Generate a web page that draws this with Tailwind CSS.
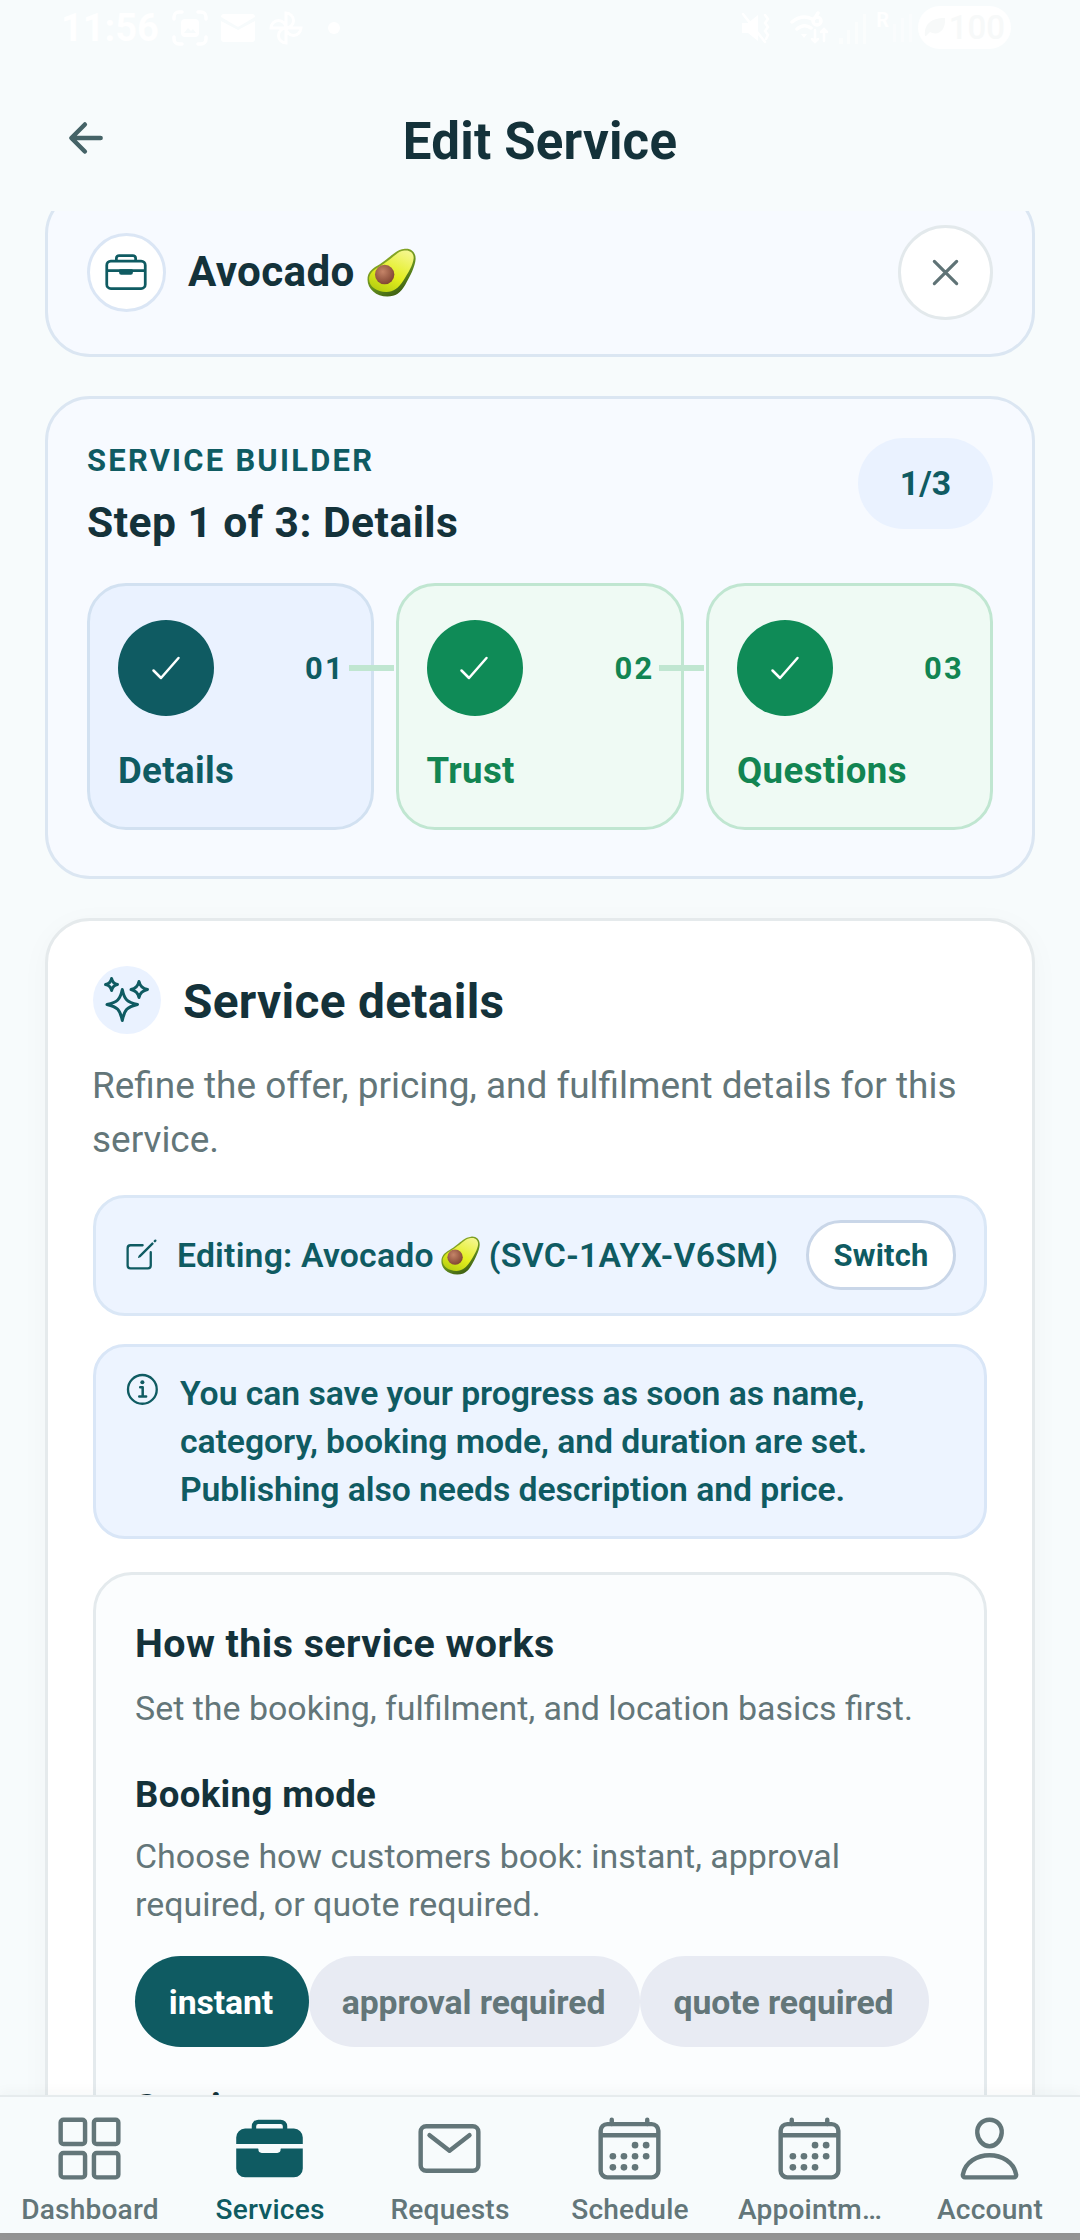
<!DOCTYPE html>
<html lang="en">
<head>
  <meta charset="UTF-8" />
  <meta name="viewport" content="width=device-width, initial-scale=1" />
  <title>Edit Service</title>
  <script src="https://cdn.jsdelivr.net/npm/@tailwindcss/browser@4"></script>
</head>
<body class="bg-[#f7fbfc] font-['Roboto',sans-serif] text-[#14323a]">
  <!-- Shared symbols -->
  <svg class="absolute h-0 w-0">
    <defs>
      <linearGradient id="skin" x1="0.2" y1="0" x2="0.8" y2="1">
        <stop offset="0" stop-color="#9db52a" />
        <stop offset="0.6" stop-color="#5f8a1c" />
        <stop offset="1" stop-color="#33500f" />
      </linearGradient>
      <linearGradient id="flesh" x1="0.8" y1="0" x2="0.3" y2="1">
        <stop offset="0" stop-color="#f4f68c" />
        <stop offset="0.6" stop-color="#e3ee1e" />
        <stop offset="1" stop-color="#b9d012" />
      </linearGradient>
      <radialGradient id="pit" cx="0.4" cy="0.35" r="0.7">
        <stop offset="0" stop-color="#c58468" />
        <stop offset="1" stop-color="#7d4230" />
      </radialGradient>
    </defs>
    <symbol id="avocado" viewBox="0 0 48 48">
      <path d="M37 .8C43 0 48 4 47.6 11C47.2 18 42 28 37.5 36C33 44 28 47.5 20 47.5C9 47.5 .5 40 .5 31C.5 24.500 4 21 10 17.500C18 12.500 22 8.500 27 4.800C30.500 2.200 33 1.300 37 .8Z" fill="url(#skin)" />
      <path d="M36.500 2.500C42 1.500 46 5 45.700 10C45.200 16.500 40 25 35.500 32C31 39 26 43 19 43C9.500 43 2 37.500 2 30.500C2 25.500 5.500 22 11 18.800C19 14 23.500 10 28 6.500C31 4.200 33 3 36.500 2.500Z" fill="url(#flesh)" />
      <circle cx="17.300" cy="26" r="9.500" fill="url(#pit)" />
    </symbol>
    <symbol id="check" viewBox="0 0 512 512">
      <path d="M416 128L192 384l-96-96" fill="none" stroke="currentColor" stroke-width="32" stroke-linecap="round" stroke-linejoin="round" />
    </symbol>
    <symbol id="calendar" viewBox="0 0 512 512">
      <rect x="48" y="80" width="416" height="384" rx="48" fill="none" stroke="currentColor" stroke-width="32" />
      <path d="M128 48v32M384 48v32" fill="none" stroke="currentColor" stroke-width="32" stroke-linecap="round" />
      <path d="M464 160H48" stroke="currentColor" stroke-width="32" />
      <g fill="currentColor">
        <circle cx="296" cy="232" r="24" /><circle cx="376" cy="232" r="24" />
        <circle cx="136" cy="312" r="24" /><circle cx="216" cy="312" r="24" /><circle cx="296" cy="312" r="24" /><circle cx="376" cy="312" r="24" />
        <circle cx="136" cy="392" r="24" /><circle cx="216" cy="392" r="24" /><circle cx="296" cy="392" r="24" />
      </g>
    </symbol>
  </svg>

  <div class="flex h-[2240px] w-[1080px] flex-col overflow-hidden">
    <header class="h-[211px] shrink-0">
      <!-- Status bar -->
      <div class="flex h-[56px] items-center pr-[69px] pl-[61px] text-white">
        <span class="w-[111px] text-[38px] leading-none font-bold">11:56</span>
        <svg class="h-[36px] w-[36px]" viewBox="0 0 36 36" fill="none" stroke="currentColor" stroke-width="3.500" stroke-linecap="round">
          <path d="M2 9V7a5 5 0 015-5h3M26 2h3a5 5 0 015 5v2M34 27v2a5 5 0 01-5 5h-3M10 34H7a5 5 0 01-5-5v-2" />
          <rect x="9" y="9" width="18" height="18" rx="4" fill="currentColor" stroke="none" />
          <path d="M12 23l4-5 3 3 2-2 3 4z" fill="#f7fbfc" stroke="none" />
        </svg>
        <svg class="ml-[13px] h-[28px] w-[34px]" viewBox="0 0 34 28">
          <path d="M3 0h28a3 3 0 013 3L17 13 0 3a3 3 0 013-3z" fill="currentColor" />
          <path d="M0 7l17 9 17-9v18a3 3 0 01-3 3H3a3 3 0 01-3-3z" fill="currentColor" />
        </svg>
        <svg class="ml-[13px] h-[36px] w-[36px]" viewBox="0 0 36 36" fill="none" stroke="currentColor" stroke-width="3">
          <path d="M18 18V3a7.500 7.500 0 010 15M18 18h15a7.500 7.500 0 01-15 0M18 18v15a7.500 7.500 0 010-15M18 18H3a7.500 7.500 0 0115 0" />
        </svg>
        <span class="ml-[24px] h-[12px] w-[12px] rounded-full bg-white"></span>

        <svg class="ml-auto h-[32px] w-[32px]" viewBox="0 0 32 32" fill="none" stroke="currentColor" stroke-width="2.500" stroke-linecap="round">
          <path d="M2 11h6l10-8v26l-10-8H2z" fill="currentColor" stroke="none" />
          <path d="M3 2l22 28M25 3l3 4-3 4 3 4-3 4 3 4-2 4" />
        </svg>
        <svg class="ml-[18px] h-[34px] w-[40px]" viewBox="0 0 40 34" fill="none" stroke="currentColor" stroke-width="3.500" stroke-linecap="round">
          <path d="M2 11Q12 3 22 8M7 18q7-6 14-1" />
          <circle cx="27" cy="10" r="4" /><path d="M25 7l3-5" />
          <path d="M14 27l-3-4h6z" fill="currentColor" stroke="none" />
          <path d="M25 19v12m-3-3l3 3 3-3M34 30V18m-3 3l3-3 3 3" stroke-width="2.500" />
        </svg>
        <svg class="ml-[9px] h-[32px] w-[30px]" viewBox="0 0 30 32" fill="currentColor" opacity="0.500">
          <path d="M0 26h4v6H0zM8 18h3v14H8zM16 10h3v22h-3zM24 2h3v30h-3z" />
        </svg>
        <span class="mt-[-16px] ml-[7px] text-[20px] leading-none font-bold">R</span>
        <svg class="ml-[4px] h-[28px] w-[22px]" viewBox="0 0 22 28" fill="currentColor" opacity="0.400">
          <path d="M0 10h3v18H0zM8 4h3v24H8zM16 0h3v28h-3z" />
        </svg>
        <div class="mt-[-2px] ml-[3px] flex h-[43px] w-[93px] items-center justify-center gap-[3px] rounded-full bg-white text-[#f7f9f9]">
          <svg class="h-[20px] w-[22px]" viewBox="0 0 22 20"><path d="M1 19C0 8 6 1 21 1c1 14-8 18-15 14l-4 4z" fill="currentColor" /></svg>
          <span class="text-[33px] leading-none font-medium">100</span>
        </div>
      </div>
      <!-- Title bar -->
      <div class="flex h-[164px] items-center">
        <svg class="ml-[62px] h-[48px] w-[48px] text-[#456367]" viewBox="0 0 512 512" fill="none" stroke="currentColor" stroke-width="48" stroke-linecap="round" stroke-linejoin="round">
          <path d="M244 400L100 256l144-144M120 256h292" />
        </svg>
        <h1 class="mt-[7px] mr-[110px] flex-1 text-center text-[51px] leading-none font-bold tracking-[0.200px]">Edit Service</h1>
      </div>
    </header>

    <main class="min-h-0 flex-1 overflow-hidden px-[45px]">
      <!-- Current service, scrolled partly under the header -->
      <section class="-mt-[22px] flex h-[168px] items-center rounded-[45px] border-3 border-[#dbe6f2] bg-[#f7faff] px-[39px] pb-[2px]">
        <div class="flex h-[79px] w-[79px] items-center justify-center rounded-full border-3 border-[#dbe6f5] bg-white text-[#0f5b62]">
          <svg class="mr-[2px] h-[44px] w-[44px]" viewBox="0 0 512 512" fill="none" stroke="currentColor" stroke-width="32" stroke-linejoin="round">
            <rect x="32" y="128" width="448" height="320" rx="48" />
            <path d="M144 128V96a32 32 0 0132-32h160a32 32 0 0132 32v32M480 240H32" />
            <path d="M192 240h128v24a8 8 0 01-8 8H200a8 8 0 01-8-8z" fill="currentColor" />
          </svg>
        </div>
        <h2 class="ml-[22px] flex items-center text-[42.200px] leading-none font-bold tracking-[0.350px]">Avocado
          <svg class="ml-[12px] h-[49px] w-[49px]"><use href="#avocado" /></svg>
        </h2>
        <button class="ml-auto flex h-[95px] w-[95px] items-center justify-center rounded-full border-3 border-[#e3e9ec] bg-white text-[#5f7376]">
          <svg class="mr-px h-[51px] w-[51px]" viewBox="0 0 512 512" fill="none" stroke="currentColor" stroke-width="32" stroke-linecap="round">
            <path d="M368 368L144 144M368 144L144 368" />
          </svg>
        </button>
      </section>

      <!-- Builder steps -->
      <section class="mt-[39px] h-[483px] rounded-[45px] border-3 border-[#dbe6f2] bg-[#f7faff] px-[39px] pt-[39px]">
        <div class="flex items-start justify-between">
          <div class="pt-[3px]">
            <p class="text-[30.900px] leading-[40px] font-bold tracking-[2.250px] text-[#0f5b62]">SERVICE BUILDER</p>
            <h2 class="mt-[16px] mb-px text-[42.600px] leading-[50px] font-bold tracking-[0.450px]">Step 1 of 3: Details</h2>
          </div>
          <span class="flex h-[91px] w-[135px] items-center justify-center rounded-full bg-[#eaf2ff] pt-[2px] text-[33.750px] font-bold text-[#0f5b62]">1/3</span>
        </div>
        <div class="mt-[35px] grid grid-cols-3 gap-[22.500px]">
          <div class="relative h-[247px] rounded-[39px] border-3 border-[#d2e1f1] bg-[#eaf2ff] px-[28px] pt-[34px] text-[#0f5b62]">
            <div class="flex items-center justify-between">
              <span class="flex h-[96px] w-[96px] items-center justify-center rounded-full bg-[#0f5b62] text-white"><svg class="mr-px h-[40px] w-[40px]"><use href="#check" /></svg></span>
              <span class="mt-[2px] -mr-[2px] text-[30.900px] font-bold tracking-[2.250px]">01</span>
            </div>
            <p class="mt-[31px] text-[36.600px] leading-[48px] font-bold tracking-[0.350px]">Details</p>
            <span class="absolute top-[79px] -right-[23px] h-[6px] w-[45px] bg-[#c0e6d1]"></span>
          </div>
          <div class="relative -ml-px h-[247px] rounded-[39px] border-3 border-[#c0e6d1] bg-[#effaf4] px-[28px] pt-[34px] text-[#128552]">
            <div class="flex items-center justify-between">
              <span class="flex h-[96px] w-[96px] items-center justify-center rounded-full bg-[#0f8b57] text-white"><svg class="mr-px h-[40px] w-[40px]"><use href="#check" /></svg></span>
              <span class="mt-[2px] -mr-[2px] text-[30.900px] font-bold tracking-[2.250px]">02</span>
            </div>
            <p class="mt-[31px] text-[36.600px] leading-[48px] font-bold tracking-[0.350px]">Trust</p>
            <span class="absolute top-[79px] -right-[23px] h-[6px] w-[45px] bg-[#c0e6d1]"></span>
          </div>
          <div class="h-[247px] rounded-[39px] border-3 border-[#c0e6d1] bg-[#effaf4] px-[28px] pt-[34px] text-[#128552]">
            <div class="flex items-center justify-between">
              <span class="flex h-[96px] w-[96px] items-center justify-center rounded-full bg-[#0f8b57] text-white"><svg class="mr-px h-[40px] w-[40px]"><use href="#check" /></svg></span>
              <span class="mt-[2px] -mr-[2px] text-[30.900px] font-bold tracking-[2.250px]">03</span>
            </div>
            <p class="mt-[31px] text-[36.600px] leading-[48px] font-bold tracking-[0.400px]">Questions</p>
          </div>
        </div>
      </section>

      <!-- Service details -->
      <section class="mt-[39px] h-[1400px] rounded-[45px] border-3 border-[#e5eaec] bg-white px-[45px] pt-[45px] shadow-[0_6px_30px_rgba(20,50,58,0.030)]">
        <div class="flex items-center">
          <div class="flex h-[68px] w-[68px] items-center justify-center rounded-full bg-[#eaf2ff] text-[#0f5b62]">
            <svg class="h-[68px] w-[68px]" viewBox="0 0 68 68" fill="none" stroke="currentColor" stroke-width="3" stroke-linejoin="round">
              <path d="M29.300 23.500C31.500 34 34 36 44.500 38.500C34 41 31.500 43.500 29.300 54.500C27 43.500 24.500 41 14 38.500C24.500 36 27 34 29.300 23.500Z" />
              <path d="M46 15.500Q47.300 22 54.500 23.500Q47.300 25 46 31.500Q44.700 25 38 23.500Q44.700 22 46 15.500Z" />
              <path d="M18.600 12.500Q19.600 17.500 24.500 18.500Q19.600 19.500 18.600 24.500Q17.600 19.500 12.500 18.500Q17.600 17.500 18.600 12.500Z" />
            </svg>
          </div>
          <h2 class="mt-[6px] ml-[22px] text-[47.800px] leading-none font-bold tracking-[0.300px]">Service details</h2>
        </div>
        <p class="-ml-px mt-[25px] text-[36.950px] leading-[54px] text-[#637679]">Refine the offer, pricing, and fulfilment details for this service.</p>

        <div class="mt-[28px] flex h-[121px] items-center rounded-[32px] border-3 border-[#dae7f6] bg-[#edf4ff] pr-[28px] pl-[27px] text-[#0f5b62]">
          <svg class="mt-[-2px] h-[37px] w-[37px]" viewBox="0 0 512 512">
            <path d="M384 224v184a40 40 0 01-40 40H104a40 40 0 01-40-40V168a40 40 0 0140-40h167.480" fill="none" stroke="currentColor" stroke-width="32" stroke-linecap="round" stroke-linejoin="round" />
            <path d="M459.940 53.250a16.060 16.060 0 00-23.220-.560L424.350 65a8 8 0 000 11.310l11.340 11.320a8 8 0 0011.340 0l12.060-12c6.100-6.090 6.670-16.010.850-22.380zM399.340 90L218.820 270.200a9 9 0 00-2.310 3.930L208.160 299a3.910 3.910 0 004.860 4.860l24.850-8.350a9 9 0 003.930-2.310L422 112.660a9 9 0 000-12.660l-9.950-10a9 9 0 00-12.710 0z" fill="currentColor" />
          </svg>
          <p class="ml-[17px] flex items-center text-[33.750px] leading-none font-semibold tracking-[0.200px] whitespace-nowrap">Editing: Avocado
            <svg class="mr-[9px] ml-[7px] h-[39px] w-[39px]"><use href="#avocado" /></svg>
            <span class="tracking-[0.350px]">(SVC-1AYX-V6SM)</span></p>
          <button class="mt-[-1px] ml-auto h-[70px] w-[150px] rounded-full border-3 border-[#c9d6e8] bg-white pt-[2px] text-[30.900px] font-bold tracking-[0.200px]">Switch</button>
        </div>

        <div class="mt-[28px] flex h-[195px] rounded-[32px] border-3 border-[#d9e6f7] bg-[#edf4ff] pt-[23px] pl-[27px] text-[#0f5b62]">
          <svg class="h-[40px] w-[40px] shrink-0" viewBox="0 0 512 512" fill="none" stroke="currentColor">
            <circle cx="248" cy="248" r="184" stroke-width="30" />
            <path d="M220 220h32v116M208 340h88" stroke-width="32" stroke-linecap="round" stroke-linejoin="round" />
            <circle cx="248" cy="156" r="26" fill="currentColor" stroke="none" />
          </svg>
          <p class="ml-[17px] w-[720px] text-[33.750px] leading-[48px] font-semibold tracking-[-0.070px]">You can save your progress as soon as name, category, booking mode, and duration are set. Publishing also needs description and price.</p>
        </div>

        <div class="mt-[33px] h-[700px] rounded-[39px] border-3 border-[#e4eaed] bg-[#fbfdfe] px-[39px] pt-[44px]">
          <h3 class="text-[39.400px] leading-[50px] font-bold tracking-[0.450px]">How this service works</h3>
          <p class="mt-[16px] text-[33.950px] leading-[48px] text-[#637679]">Set the booking, fulfilment, and location basics first.</p>
          <h4 class="mt-[38px] text-[36.600px] leading-[48px] font-bold tracking-[0.350px]">Booking mode</h4>
          <p class="mt-[14px] text-[33.950px] leading-[48px] text-[#637679]">Choose how customers book: instant, approval required, or quote required.</p>
          <div class="mt-[27px] flex text-[33.750px] font-bold tracking-[-0.100px] text-[#637679]">
            <button class="h-[91px] w-[174px] rounded-full bg-[#0f5b62] pt-[3px] pr-[2px] text-white">instant</button>
            <button class="h-[91px] w-[331px] rounded-full bg-[#e8ebf3] pt-[3px] pr-[2px]">approval required</button>
            <button class="h-[91px] w-[289px] rounded-full bg-[#e8ebf3] pt-[3px] pr-[2px]">quote required</button>
          </div>
          <h4 class="mt-[37px] text-[36.600px] leading-[48px] font-bold tracking-[0.350px]">Service</h4>
        </div>
      </section>
    </main>

    <!-- Tab bar -->
    <nav class="z-10 grid h-[138px] shrink-0 grid-cols-6 border-t-2 border-[#e6ebed] bg-[#f7fbfc] pt-[16px] text-[28.100px] font-medium tracking-[0.200px] text-[#637679] shadow-[0_-3px_12px_rgba(20,50,58,0.040)]">
      <a class="flex flex-col items-center gap-[9px] leading-[34px]">
        <svg class="mr-[2px] h-[71px] w-[71px]" viewBox="0 0 512 512" fill="none" stroke="currentColor" stroke-width="32">
          <rect x="48" y="48" width="176" height="176" rx="20" /><rect x="288" y="48" width="176" height="176" rx="20" />
          <rect x="48" y="288" width="176" height="176" rx="20" /><rect x="288" y="288" width="176" height="176" rx="20" />
        </svg>
        Dashboard
      </a>
      <a class="flex flex-col items-center gap-[9px] leading-[34px] text-[#0f5b62]">
        <svg class="mr-[2px] h-[71px] w-[71px]" viewBox="0 0 512 512" fill="currentColor">
          <path d="M496 176a64 64 0 00-64-64h-48V96a48 48 0 00-48-48H176a48 48 0 00-48 48v16H80a64 64 0 00-64 64v48h480zM352 112H160V96a16 16 0 0116-16h160a16 16 0 0116 16z" />
          <path d="M336 264a24 24 0 01-24 24H200a24 24 0 01-24-24v-4a4 4 0 00-4-4H16v144a64 64 0 0064 64h352a64 64 0 0064-64V256H340a4 4 0 00-4 4z" />
        </svg>
        Services
      </a>
      <a class="flex flex-col items-center gap-[9px] leading-[34px]">
        <svg class="mr-[2px] h-[71px] w-[71px]" viewBox="0 0 512 512" fill="none" stroke="currentColor" stroke-width="32" stroke-linecap="round" stroke-linejoin="round">
          <rect x="48" y="96" width="416" height="320" rx="40" />
          <path d="M112 160l144 112 144-112" />
        </svg>
        Requests
      </a>
      <a class="flex flex-col items-center gap-[9px] leading-[34px]">
        <svg class="mr-[2px] h-[71px] w-[71px]"><use href="#calendar" /></svg>
        Schedule
      </a>
      <a class="flex flex-col items-center gap-[9px] leading-[34px]">
        <svg class="mr-[2px] h-[71px] w-[71px]"><use href="#calendar" /></svg>
        Appointm…
      </a>
      <a class="flex flex-col items-center gap-[9px] leading-[34px]">
        <svg class="mr-[2px] h-[71px] w-[71px]" viewBox="0 0 512 512" fill="none" stroke="currentColor" stroke-width="32" stroke-linecap="round" stroke-linejoin="round">
          <path d="M344 144c-3.920 52.870-44 96-88 96s-84.150-43.120-88-96c-4-55 35-96 88-96s92 42 88 96z" />
          <path d="M256 304c-87 0-175.300 48-191.640 138.600C62.390 453.520 68.570 464 80 464h352c11.440 0 17.620-10.480 15.650-21.400C431.300 352 343 304 256 304z" />
        </svg>
        Account
      </a>
    </nav>
    <div class="h-[7px] shrink-0 bg-[#949494]"></div>
  </div>
</body>
</html>
